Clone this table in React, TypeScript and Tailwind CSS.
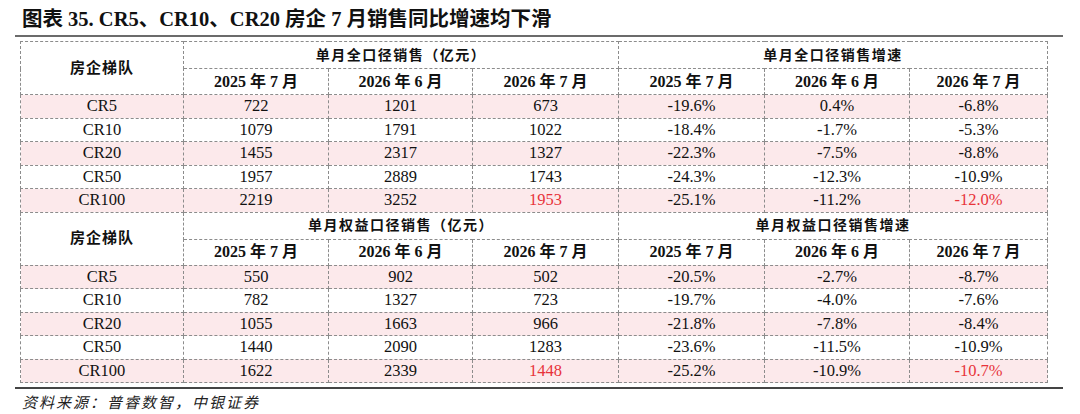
const serif = "font-['Liberation_Serif','Noto_Sans_CJK_SC',serif]";

type Row = { name: string; a: string; b: string; c: string; d: string; e: string; f: string; pink: boolean; redC?: boolean; redF?: boolean };

const blockA: Row[] = [
  { name: 'CR5', a: '722', b: '1201', c: '673', d: '-19.6%', e: '0.4%', f: '-6.8%', pink: true },
  { name: 'CR10', a: '1079', b: '1791', c: '1022', d: '-18.4%', e: '-1.7%', f: '-5.3%', pink: false },
  { name: 'CR20', a: '1455', b: '2317', c: '1327', d: '-22.3%', e: '-7.5%', f: '-8.8%', pink: true },
  { name: 'CR50', a: '1957', b: '2889', c: '1743', d: '-24.3%', e: '-12.3%', f: '-10.9%', pink: false },
  { name: 'CR100', a: '2219', b: '3252', c: '1953', d: '-25.1%', e: '-11.2%', f: '-12.0%', pink: true, redC: true, redF: true },
]

const blockB: Row[] = [
  { name: 'CR5', a: '550', b: '902', c: '502', d: '-20.5%', e: '-2.7%', f: '-8.7%', pink: true },
  { name: 'CR10', a: '782', b: '1327', c: '723', d: '-19.7%', e: '-4.0%', f: '-7.6%', pink: false },
  { name: 'CR20', a: '1055', b: '1663', c: '966', d: '-21.8%', e: '-7.8%', f: '-8.4%', pink: true },
  { name: 'CR50', a: '1440', b: '2090', c: '1283', d: '-23.6%', e: '-11.5%', f: '-10.9%', pink: false },
  { name: 'CR100', a: '1622', b: '2339', c: '1448', d: '-25.2%', e: '-10.9%', f: '-10.7%', pink: true, redC: true, redF: true },
]

const cell = 'border border-dashed border-[#8c8c8c] text-center p-0'
const years = ['2025 年 7 月', '2026 年 6 月', '2026 年 7 月']

function Block({ left, right, rows }: { left: string; right: string; rows: Row[] }) {
  return (
    <>
      <tr className="h-[27px]">
        <td rowSpan={2} className={`${cell} text-[15px] font-semibold tracking-[1px] text-[#111]`}>房企梯队</td>
        <td colSpan={3} className={`${cell} text-[14px] font-semibold tracking-[1.5px] text-[#111]`}>{left}</td>
        <td colSpan={3} className={`${cell} text-[14px] font-semibold tracking-[1.5px] text-[#111]`}>{right}</td>
      </tr>
      <tr className="h-[26px]">
        {[...years, ...years].map((y, i) => (
          <td key={i} className={`${cell} text-[16px] font-bold text-[#111]`}>{y}</td>
        ))}
      </tr>
      {rows.map((r) => (
        <tr key={r.name} className={`h-[23.5px] ${r.pink ? 'bg-[#fce9eb]' : 'bg-white'} text-[16.5px] leading-none text-[#111]`}>
          <td className={cell}>{r.name}</td>
          <td className={cell}>{r.a}</td>
          <td className={cell}>{r.b}</td>
          <td className={`${cell} ${r.redC ? 'text-[#e8333a]' : ''}`}>{r.c}</td>
          <td className={cell}>{r.d}</td>
          <td className={cell}>{r.e}</td>
          <td className={`${cell} ${r.redF ? 'text-[#e8333a]' : ''}`}>{r.f}</td>
        </tr>
      ))}
    </>
  )
}

export default function App() {
  return (
    <div className={`w-[1080px] h-[414px] bg-white ${serif} overflow-hidden`}>
      <h1 className="pl-[22px] pt-[7px] text-[20.5px] leading-[24px] font-bold text-[#111] whitespace-nowrap">
        图表 35. CR5、CR10、CR20 房企 7 月销售同比增速均下滑
      </h1>
      <div className="ml-[15px] mt-[4px] w-[1048px] h-[2px] bg-[#6b6b6b]" />
      <table className="ml-[20px] mt-[4px] w-[1027px] table-fixed border-collapse">
        <colgroup>
          <col className="w-[163px]" />
          <col className="w-[145px]" />
          <col className="w-[144px]" />
          <col className="w-[146px]" />
          <col className="w-[146px]" />
          <col className="w-[145px]" />
          <col className="w-[138px]" />
        </colgroup>
        <tbody>
          <Block left="单月全口径销售（亿元）" right="单月全口径销售增速" rows={blockA} />
          <Block left="单月权益口径销售（亿元）" right="单月权益口径销售增速" rows={blockB} />
        </tbody>
      </table>
      <div className="ml-[15px] mt-[4px] w-[1048px] h-[2px] bg-[#444]" />
      <p className="pl-[22px] pt-[4px] text-[15px] leading-[20px] italic tracking-[2px] text-[#222]">
        资料来源：普睿数智，中银证券
      </p>
    </div>
  )
}
